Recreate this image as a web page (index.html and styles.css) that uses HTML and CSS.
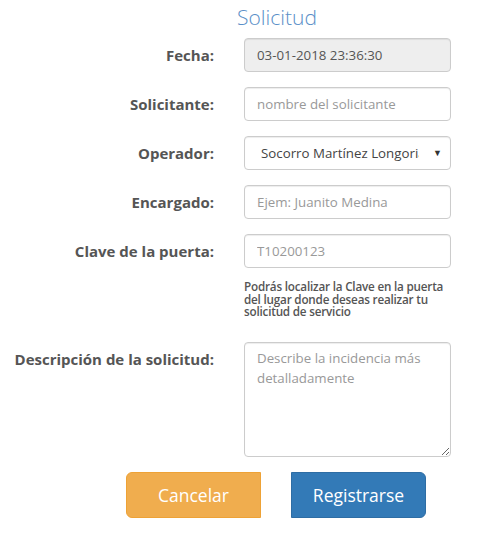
FILE: index.html
```html
<!DOCTYPE html>
<html lang="es">
<head>
<meta charset="utf-8">
<title>Solicitud</title>
<link rel="stylesheet" href="styles.css">
</head>
<body>
<h2 class="title">Solicitud</h2>
<form class="form">
  <div class="row">
    <label class="label">Fecha:</label>
    <input class="control control-readonly" type="text" value="03-01-2018 23:36:30" readonly>
  </div>
  <div class="row">
    <label class="label">Solicitante:</label>
    <input class="control" type="text" placeholder="nombre del solicitante">
  </div>
  <div class="row">
    <label class="label">Operador:</label>
    <div class="select-wrap">
      <select class="control select">
        <option>Socorro Martínez Longoria</option>
      </select>
      <span class="caret">▼</span>
    </div>
  </div>
  <div class="row">
    <label class="label">Encargado:</label>
    <input class="control" type="text" placeholder="Ejem: Juanito Medina">
  </div>
  <div class="row row-help">
    <label class="label">Clave de la puerta:</label>
    <div>
      <input class="control" type="text" placeholder="T10200123">
      <p class="help">Podrás localizar la Clave en la puerta del lugar donde deseas realizar tu solicitud de servicio</p>
    </div>
  </div>
  <div class="row">
    <label class="label">Descripción de la solicitud:</label>
    <textarea class="control textarea" placeholder="Describe la incidencia más detalladamente"></textarea>
  </div>
  <div class="actions">
    <button type="button" class="btn btn-cancel">Cancelar</button>
    <button type="button" class="btn btn-submit">Registrarse</button>
  </div>
</form>
</body>
</html>
```
FILE: styles.css
```css
* { box-sizing: border-box; }
body {
  margin: 0;
  font-family: "Open Sans", "Noto Sans", sans-serif;
  color: #555;
  background: #fff;
}
.title {
  margin: 0;
  padding: 3px 0 0 237px;
  height: 38px;
  font-size: 21px;
  line-height: 28px;
  font-weight: 300;
  color: #5a8fc8;
}
.form { margin: 0; }
.row {
  display: grid;
  grid-template-columns: 214px 207px;
  column-gap: 30px;
  margin-bottom: 15px;
}
.label {
  text-align: right;
  font-weight: bold;
  font-size: 15px;
  line-height: 20px;
  padding-top: 7px;
  color: #555;
}
.control {
  display: block;
  width: 207px;
  height: 34px;
  border: 1px solid #ccc;
  border-radius: 4px;
  padding: 6px 12px;
  font-family: "Open Sans", "Noto Sans", sans-serif;
  font-size: 13.3px;
  color: #555;
  background: #fff;
  box-shadow: inset 0 1px 1px rgba(0,0,0,.075);
}
.control::placeholder { color: #999; }
.control-readonly { background: #eee; color: #555; }
.select-wrap { position: relative; width: 207px; }
.select {
  appearance: none;
  -webkit-appearance: none;
  padding: 6px 31px 6px 16px;
  color: #444;
}
.caret {
  position: absolute;
  right: 9px;
  top: 10px;
  font-size: 9px;
  color: #333;
  pointer-events: none;
}
.help {
  margin: 12px 0 0;
  font-size: 11.7px;
  line-height: 12.5px;
  font-weight: 600;
  color: #555;
  letter-spacing: -0.2px;
}
.row-help { margin-bottom: 24px; }
.textarea {
  height: 115px;
  resize: vertical;
  line-height: 20px;
  padding-top: 5px;
}
.actions {
  display: flex;
  gap: 30px;
  padding-left: 126px;
}
.btn {
  width: 135px;
  height: 46px;
  font-family: "Open Sans", "Noto Sans", sans-serif;
  font-size: 17.5px;
  color: #fff;
  border: 1px solid;
  cursor: pointer;
}
.btn-cancel {
  background: #f0ad4e;
  border-color: #eea236;
  border-radius: 6px 0 0 6px;
}
.btn-submit {
  background: #337ab7;
  border-color: #2e6da4;
  border-radius: 0 6px 6px 0;
}
```
